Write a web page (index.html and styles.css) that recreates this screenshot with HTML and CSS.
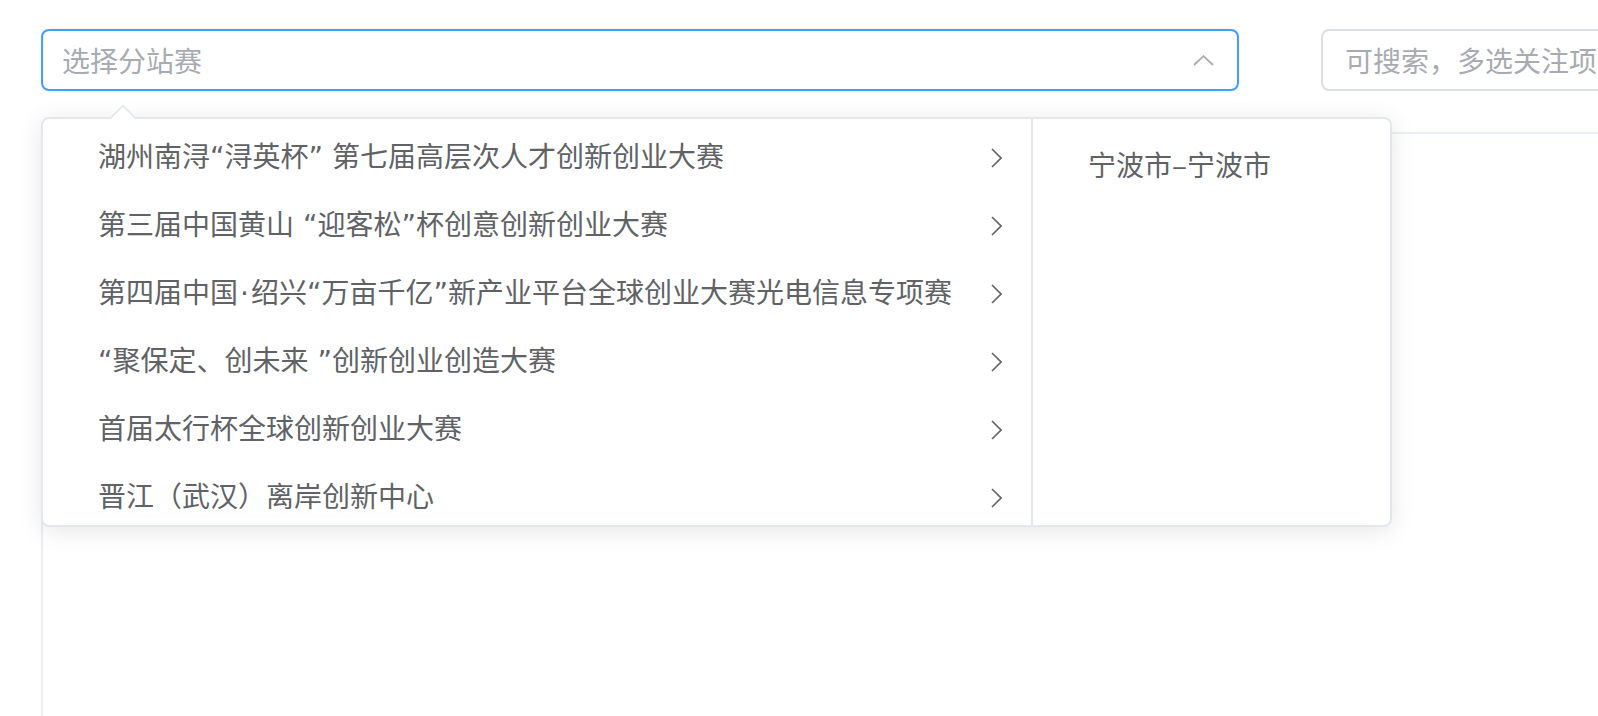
FILE: index.html
```html
<!DOCTYPE html>
<html lang="zh-CN">
<head>
<meta charset="utf-8">
<title>选择分站赛</title>
<link rel="stylesheet" href="styles.css">
</head>
<body>
<div class="page">
  <div class="filters">
    <div class="select is-focus">
      <span class="placeholder">选择分站赛</span>
      <svg class="arrow-up" width="21" height="11" viewBox="0 0 21 11"><polyline points="1,10 10.5,1.2 20,10" fill="none" stroke="#a8abb2" stroke-width="1.8" stroke-linejoin="miter"/></svg>
      <div class="dropdown">
        <div class="menu menu-left">
          <ul class="list list-left">
            <li class="item"><span class="label">湖州南浔“浔英杯” 第七届高层次人才创新创业大赛</span><svg class="chev" width="11" height="20" viewBox="0 0 11 20"><polyline points="1,1 10,10 1,19" fill="none" stroke="#606266" stroke-width="1.6"/></svg></li>
            <li class="item"><span class="label">第三届中国黄山 “迎客松”杯创意创新创业大赛</span><svg class="chev" width="11" height="20" viewBox="0 0 11 20"><polyline points="1,1 10,10 1,19" fill="none" stroke="#606266" stroke-width="1.6"/></svg></li>
            <li class="item"><span class="label">第四届中国<span class="dot">·</span>绍兴“万亩千亿”新产业平台全球创业大赛光电信息专项赛</span><svg class="chev" width="11" height="20" viewBox="0 0 11 20"><polyline points="1,1 10,10 1,19" fill="none" stroke="#606266" stroke-width="1.6"/></svg></li>
            <li class="item"><span class="label">“聚保定、创未来 ”创新创业创造大赛</span><svg class="chev" width="11" height="20" viewBox="0 0 11 20"><polyline points="1,1 10,10 1,19" fill="none" stroke="#606266" stroke-width="1.6"/></svg></li>
            <li class="item"><span class="label">首届太行杯全球创新创业大赛</span><svg class="chev" width="11" height="20" viewBox="0 0 11 20"><polyline points="1,1 10,10 1,19" fill="none" stroke="#606266" stroke-width="1.6"/></svg></li>
            <li class="item"><span class="label">晋江（武汉）离岸创新中心</span><svg class="chev" width="11" height="20" viewBox="0 0 11 20"><polyline points="1,1 10,10 1,19" fill="none" stroke="#606266" stroke-width="1.6"/></svg></li>
          </ul>
        </div>
        <div class="menu menu-right">
          <ul class="list list-right">
            <li class="item"><span class="label label-cn">宁波市–宁波市</span></li>
          </ul>
        </div>
      </div>
    </div>
    <div class="search">
      <span class="placeholder">可搜索，多选关注项</span>
    </div>
  </div>
  <div class="table"></div>
</div>
</body>
</html>
```

FILE: styles.css
```css
html, body {
  margin: 0;
  padding: 0;
  background: #ffffff;
  overflow: hidden;
}

body {
  font-family: "Noto Sans CJK SC", "Noto Sans", sans-serif;
  color: #606266;
  width: 1598px;
  height: 716px;
}

.page {
  padding: 29px 0 0 41px;
  box-sizing: border-box;
  height: 716px;
  overflow: hidden;
}

.filters {
  display: flex;
  gap: 82px;
}

.select {
  position: relative;
  flex: 0 0 1198px;
  height: 62px;
  box-sizing: border-box;
  border: 2px solid #409eff;
  border-radius: 8px;
  display: flex;
  align-items: center;
  justify-content: space-between;
  padding: 0 23px 0 19px;
}

.placeholder {
  font-size: 28px;
  line-height: 40px;
  color: #a8abb2;
  white-space: nowrap;
}

.arrow-up {
  display: block;
  margin-top: 1px;
}

.search {
  flex: 0 0 420px;
  height: 62px;
  box-sizing: border-box;
  border: 2px solid #dcdfe6;
  border-radius: 8px;
  display: flex;
  align-items: center;
  padding-left: 22px;
  overflow: hidden;
}

.table {
  margin-top: 41px;
  height: 700px;
  border-top: 2px solid #ebeef5;
  border-left: 2px solid #ebeef5;
}

.dropdown {
  position: absolute;
  top: 86px;
  left: -2px;
  width: 1351px;
  height: 410px;
  box-sizing: border-box;
  background: #fff;
  border: 2px solid #e4e7ed;
  border-radius: 8px;
  box-shadow: 0 4px 24px rgba(0, 0, 0, 0.1);
  display: flex;
  z-index: 10;
}

.dropdown::before {
  content: "";
  position: absolute;
  top: -11px;
  left: 71px;
  width: 18px;
  height: 18px;
  background: #fff;
  border-top: 2px solid #e4e7ed;
  border-left: 2px solid #e4e7ed;
  box-sizing: border-box;
  transform: rotate(45deg);
  border-top-left-radius: 2px;
}

.menu {
  overflow: hidden;
  border-radius: 6px;
}

.menu-left {
  flex: 0 0 990px;
  box-sizing: border-box;
  border-right: 2px solid #e4e7ed;
  border-radius: 6px 0 0 6px;
}

.menu-right {
  flex: 1 1 auto;
  border-radius: 0 6px 6px 0;
}

.list {
  list-style: none;
  margin: 0;
  padding: 0;
}

.list-left {
  padding-top: 5px;
}

.list-right {
  padding-top: 11px;
}

.item {
  height: 68px;
  display: flex;
  align-items: center;
  justify-content: space-between;
  padding: 0 29px 0 55px;
  font-size: 28px;
  line-height: 68px;
  color: #606266;
  white-space: nowrap;
}

.label {
  font-family: "DejaVu Sans", "Noto Sans CJK SC", sans-serif;
}

.label-cn {
  font-family: "Noto Sans CJK SC", sans-serif;
}

.dot {
  padding: 0 2px;
}

.chev {
  display: block;
  flex: 0 0 auto;
}
```
